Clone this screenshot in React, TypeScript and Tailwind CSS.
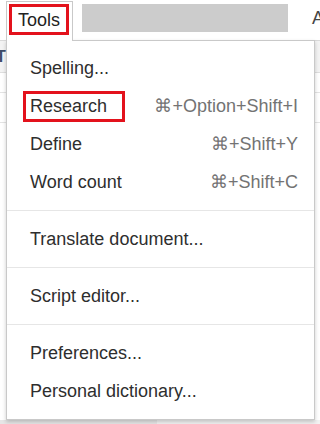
import React from 'react';

type Item = { label: string; shortcut?: string; marked?: boolean };

const groups: Item[][] = [
    [
        { label: 'Spelling...' },
        { label: 'Research', shortcut: '⌘+Option+Shift+I', marked: true },
        { label: 'Define', shortcut: '⌘+Shift+Y' },
        { label: 'Word count', shortcut: '⌘+Shift+C' },
    ],
    [{ label: 'Translate document...' }],
    [{ label: 'Script editor...' }],
    [{ label: 'Preferences...' }, { label: 'Personal dictionary...' }],
];

const MenuItem: React.FC<{ item: Item }> = ({ item }) => (
    <div className="relative flex items-center justify-between h-[38px] pl-[23px] pr-[16px] leading-[38px]">
        <span className="text-[#2e2e2e]">{item.label}</span>
        {item.shortcut && <span className="text-[#737373]">{item.shortcut}</span>}
        {item.marked && (
            <div className="absolute left-[16px] top-[4px] w-[102px] h-[31px] border-[3px] border-[#e3121c] pointer-events-none"></div>
        )}
    </div>
);

const App: React.FC = () => {
    return (
        <div className="relative w-[320px] h-[424px] bg-white overflow-hidden text-[18px] font-['Liberation_Sans',Arial,sans-serif]">
            {/* menu bar */}
            <div className="flex items-start h-[41px] border-b border-[#d9d9d9]">
                <div className="shrink-0 relative z-20 ml-[6px] mt-[1px] w-[67px] h-[40px] bg-white border border-b-0 border-[#c9c9c9] pl-[2px] pt-[2px]">
                    <div className="w-[60px] h-[31px] border-[3px] border-[#e3121c] pl-[6px] leading-[25px] pt-[1px] text-[#222222]">
                        Tools
                    </div>
                </div>
                <div className="shrink-0 ml-[9px] mt-[4px] w-[206px] h-[28px] bg-[#cccccc]"></div>
                <div className="shrink-0 ml-[24px] mt-[6px] leading-[25px] text-[#444444]">A</div>
            </div>

            {/* page behind the menu */}
            <div className="h-[32px] bg-[#f3f3f3] border-b border-[#dedede] leading-[32px] text-[16px] text-[#3d4a66] font-bold -ml-[4px]">T</div>
            <div className="h-[20px] border-b border-[#e3e3e3]"></div>
            <div className="h-[30px] border-b border-[#e3e3e3]"></div>
            <div className="absolute left-0 bottom-0 w-[157px] h-[4px] bg-[#e6e6e6]"></div>
            <div className="absolute left-[157px] bottom-0 w-[163px] h-[4px] bg-[#f2f2f2]"></div>

            {/* dropdown */}
            <div className="absolute z-10 left-[6px] top-[40px] w-[309px] bg-white border border-[#c9c9c9] shadow-[0_2px_4px_rgba(0,0,0,0.2)] pt-[8px] pb-[9px]">
                {groups.map((group, gi) => (
                    <div key={gi}>
                        {gi > 0 && <div className="my-[9px] h-px bg-[#e6e6e6]"></div>}
                        {group.map(item => (
                            <MenuItem key={item.label} item={item} />
                        ))}
                    </div>
                ))}
            </div>
        </div>
    );
};

export default App;
